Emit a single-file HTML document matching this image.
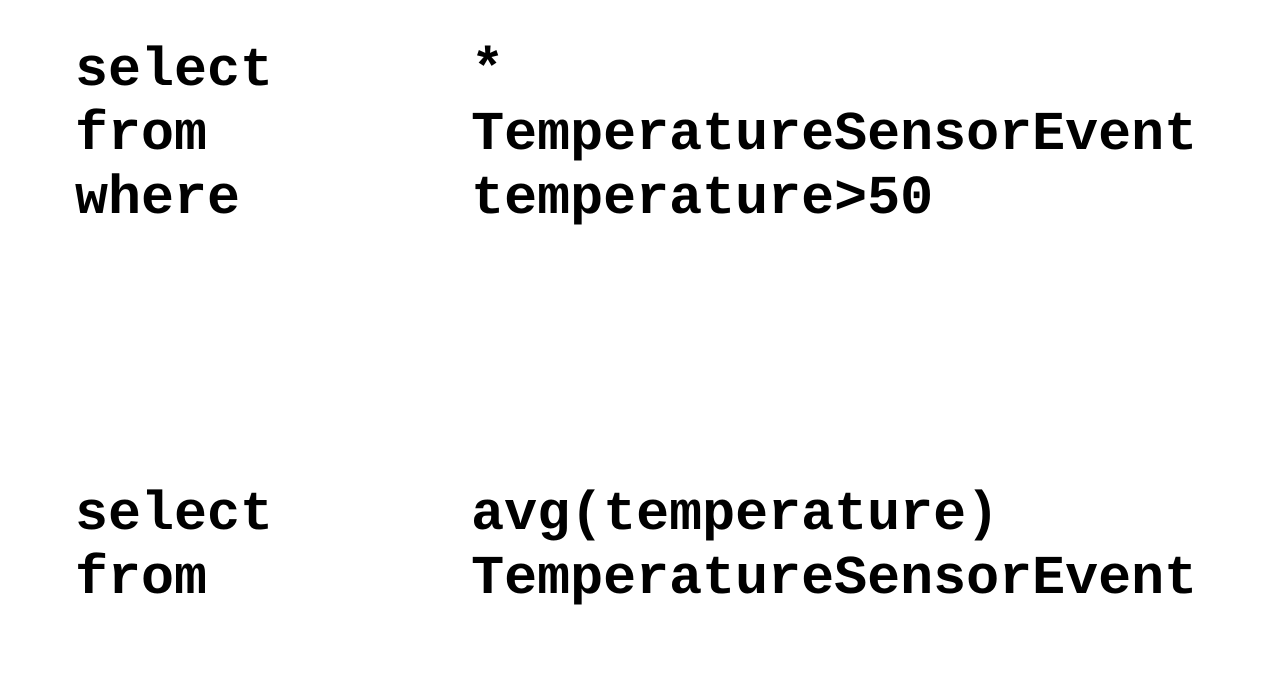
<!DOCTYPE html>
<html><head><style>
body{margin:0;width:1262px;height:676px;background:#fff;overflow:hidden;position:relative}
pre{position:absolute;left:75px;margin:0;font-family:"Liberation Mono",monospace;font-weight:bold;font-size:55px;line-height:64px;color:#000}
</style></head><body>
<pre style="top:39px">select      *
from        TemperatureSensorEvent
where       temperature&gt;50</pre>
<pre style="top:483px">select      avg(temperature)
from        TemperatureSensorEvent</pre>
</body></html>
